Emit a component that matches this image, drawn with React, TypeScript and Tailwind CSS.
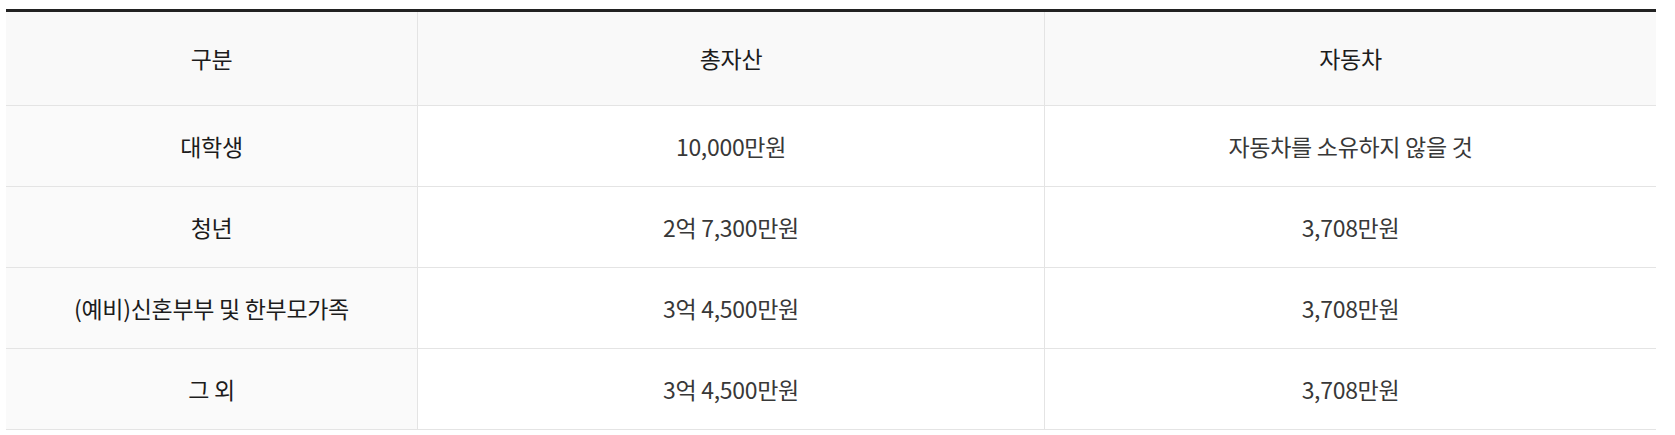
const FONT = "font-['Noto_Sans_CJK_KR','Noto_Sans',sans-serif]";

const rows = [
  { label: '대학생', asset: '10,000만원', car: '자동차를 소유하지 않을 것' },
  { label: '청년', asset: '2억 7,300만원', car: '3,708만원' },
  { label: '(예비)신혼부부 및 한부모가족', asset: '3억 4,500만원', car: '3,708만원' },
  { label: '그 외', asset: '3억 4,500만원', car: '3,708만원' },
];

export default function App() {
  return (
    <div className={`${FONT} bg-white pt-[9px] pl-[6px]`}>
      <div className="w-[1650px] border-t-[3px] border-[#222]">
        {/* header */}
        <div className="grid grid-cols-[412px_627px_1fr] bg-[#f9f9f9] text-[23px] tracking-[-0.3px] text-[#1c1c1c]">
          <div className="flex h-[94px] items-center justify-center border-b border-r border-[#e4e4e4]">구분</div>
          <div className="flex h-[94px] items-center justify-center border-b border-r border-[#e4e4e4]">총자산</div>
          <div className="flex h-[94px] items-center justify-center border-b border-[#e4e4e4]">자동차</div>
        </div>

        {rows.map((r) => (
          <div key={r.label} className="grid grid-cols-[412px_627px_1fr] text-[23px] tracking-[-0.3px]">
            <div className="flex h-[81px] items-center justify-center border-b border-r border-[#e4e4e4] bg-[#fafafa] text-[#1c1c1c]">
              {r.label}
            </div>
            <div className="flex h-[81px] items-center justify-center border-b border-r border-[#e4e4e4] text-[#383838]">
              {r.asset}
            </div>
            <div className="flex h-[81px] items-center justify-center border-b border-[#e4e4e4] text-[#383838]">
              {r.car}
            </div>
          </div>
        ))}
      </div>
    </div>
  );
}
